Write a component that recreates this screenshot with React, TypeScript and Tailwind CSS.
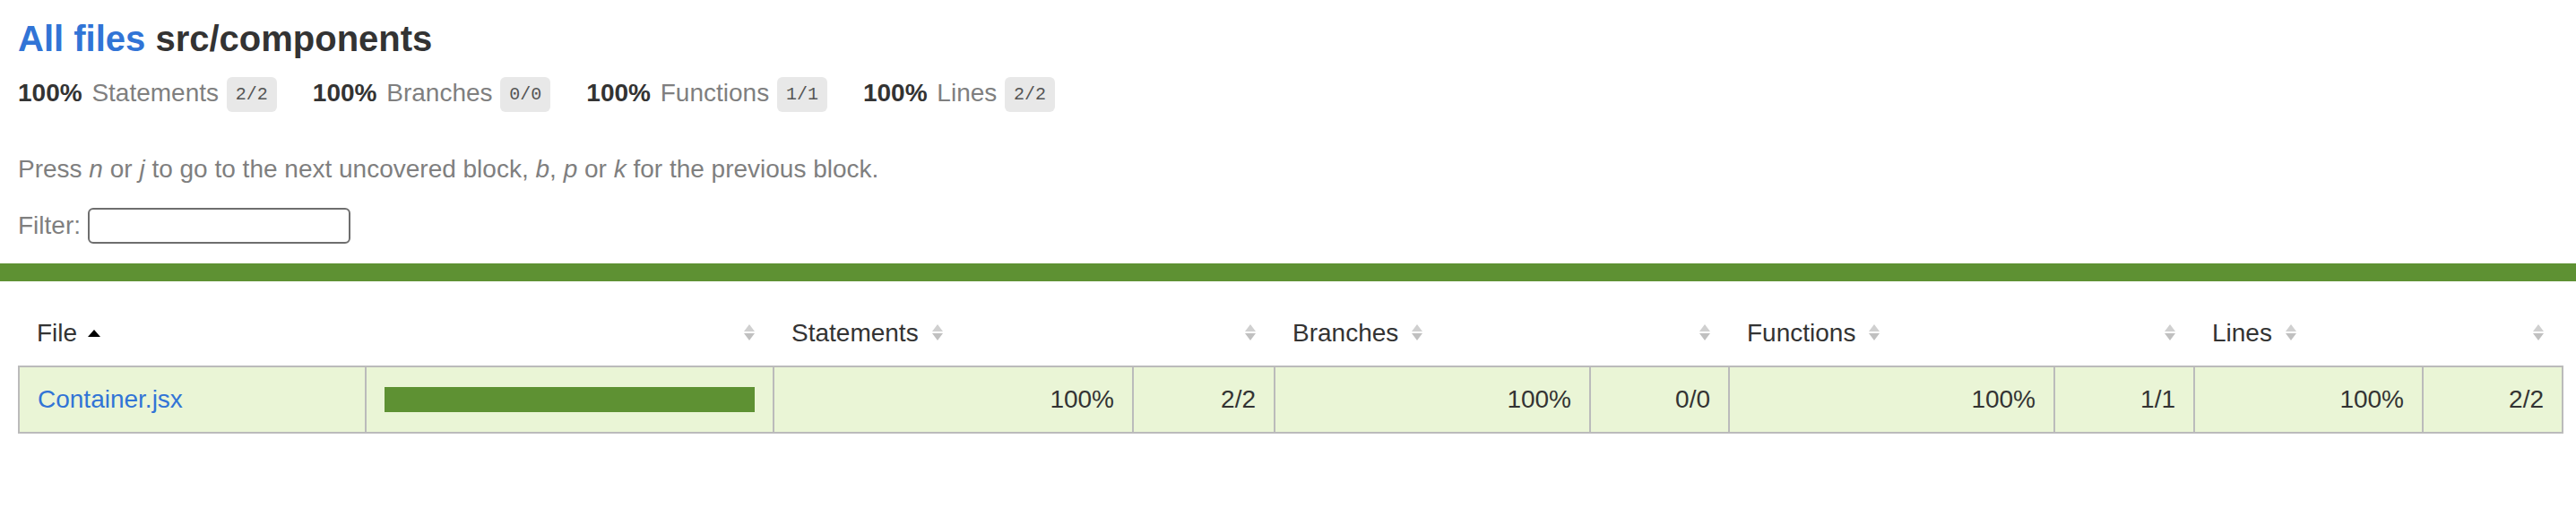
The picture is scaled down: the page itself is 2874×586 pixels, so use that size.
import React from "react";

const summary = [
  { pct: "100%", label: "Statements", frac: "2/2" },
  { pct: "100%", label: "Branches", frac: "0/0" },
  { pct: "100%", label: "Functions", frac: "1/1" },
  { pct: "100%", label: "Lines", frac: "2/2" },
];

function Sorter() {
  return (
    <svg
      width="14"
      height="20"
      viewBox="0 0 14 20"
      className="inline-block ml-[14px] align-baseline"
    >
      <polygon points="1,9 7,1 13,9" fill="#d0d0d0" />
      <polygon points="1,11 13,11 7,19" fill="#c0c0c0" />
    </svg>
  );
}

function SortedAsc() {
  return (
    <svg
      width="14"
      height="20"
      viewBox="0 0 14 20"
      className="inline-block ml-[12px] align-baseline"
    >
      <polygon points="0,15 7,7 14,15" fill="#000" />
    </svg>
  );
}

export default function App() {
  const cells = [
    { pct: "100%", abs: "2/2" },
    { pct: "100%", abs: "0/0" },
    { pct: "100%", abs: "1/1" },
    { pct: "100%", abs: "2/2" },
  ];
  const heads = ["Statements", "Branches", "Functions", "Lines"];
  const pctW = ["w-[401px]", "w-[352px]", "w-[363px]", "w-[255px]"];
  const absW = ["w-[158px]", "w-[155px]", "w-[156px]", "w-[156px]"];

  return (
    <div className="w-[2874px] bg-white text-[#333] font-['Liberation_Sans',Arial,sans-serif] text-[28px]">
      {/* header block */}
      <div className="px-5 pt-5 pb-[22px]">
        <h1 className="text-[40px] leading-[46px] font-bold m-0">
          <a className="text-[#3174d6]">All files</a> src/components
        </h1>
        <div className="flex">
          {summary.map((s) => (
            <div key={s.label} className="pt-[22px] pb-[18px] pr-10 leading-[32px] whitespace-nowrap">
              <span className="font-bold">{s.pct} </span>{" "}
              <span className="ml-[3px] text-[#7f7f7f]">{s.label}</span>{" "}
              <span className="ml-[1px] font-['Liberation_Mono',monospace] text-[20px] text-[#555] bg-[#e8e8e8] px-[10px] py-2 rounded-[6px] align-middle">
                {s.frac}
              </span>
            </div>
          ))}
        </div>
        <p className="mt-[33px] leading-[32px] text-[#7f7f7f]">
          Press <em>n</em> or <em>j</em> to go to the next uncovered block, <em>b</em>,{" "}
          <em>p</em> or <em>k</em> for the previous block.
        </p>
        <div className="mt-[27px] flex items-center h-[40px] text-[#7f7f7f]">
          <span>Filter:</span>
          <input
            type="search"
            className="ml-[8px] w-[293px] h-[40px] border-2 border-[#6e6e6e] rounded-[6px] bg-white"
          />
        </div>
      </div>

      {/* status line */}
      <div className="h-[20px] bg-[#5e9133]" />

      {/* table */}
      <div className="pl-5 pt-[22px] pr-4">
        <table className="border-collapse table-fixed w-[2838px]">
          <thead>
            <tr className="border-b-2 border-[#bbb]">
              <th className="w-[387px] p-5 text-left font-normal leading-[32px] whitespace-nowrap">
                File
                <SortedAsc />
              </th>
              <th className="w-[455px] p-5 text-right font-normal leading-[32px]">
                <Sorter />
              </th>
              {heads.map((h, i) => (
                <React.Fragment key={h}>
                  <th className={`${pctW[i]} p-5 text-left font-normal leading-[32px] whitespace-nowrap`}>
                    {h}
                    <Sorter />
                  </th>
                  <th className={`${absW[i]} p-5 text-right font-normal leading-[32px]`}>
                    <Sorter />
                  </th>
                </React.Fragment>
              ))}
            </tr>
          </thead>
          <tbody className="border-2 border-[#bbb]">
            <tr className="bg-[#eaf5d6] border-b-2 border-[#bbb]">
              <td className="p-5 leading-[32px] border-r-2 border-[#bbb] whitespace-nowrap">
                <a className="text-[#3174d6]">Container.jsx</a>
              </td>
              <td className="p-5 leading-[0] border-r-2 border-[#bbb]">
                <div className="h-[28px] w-full bg-[#5e9133]" />
              </td>
              {cells.map((c, i) => (
                <React.Fragment key={i}>
                  <td className="p-5 leading-[32px] text-right border-r-2 border-[#bbb]">
                    {c.pct}
                  </td>
                  <td
                    className={`p-5 leading-[32px] text-right ${
                      i === 3 ? "" : "border-r-2 border-[#bbb]"
                    }`}
                  >
                    {c.abs}
                  </td>
                </React.Fragment>
              ))}
            </tr>
          </tbody>
        </table>
      </div>
    </div>
  );
}
